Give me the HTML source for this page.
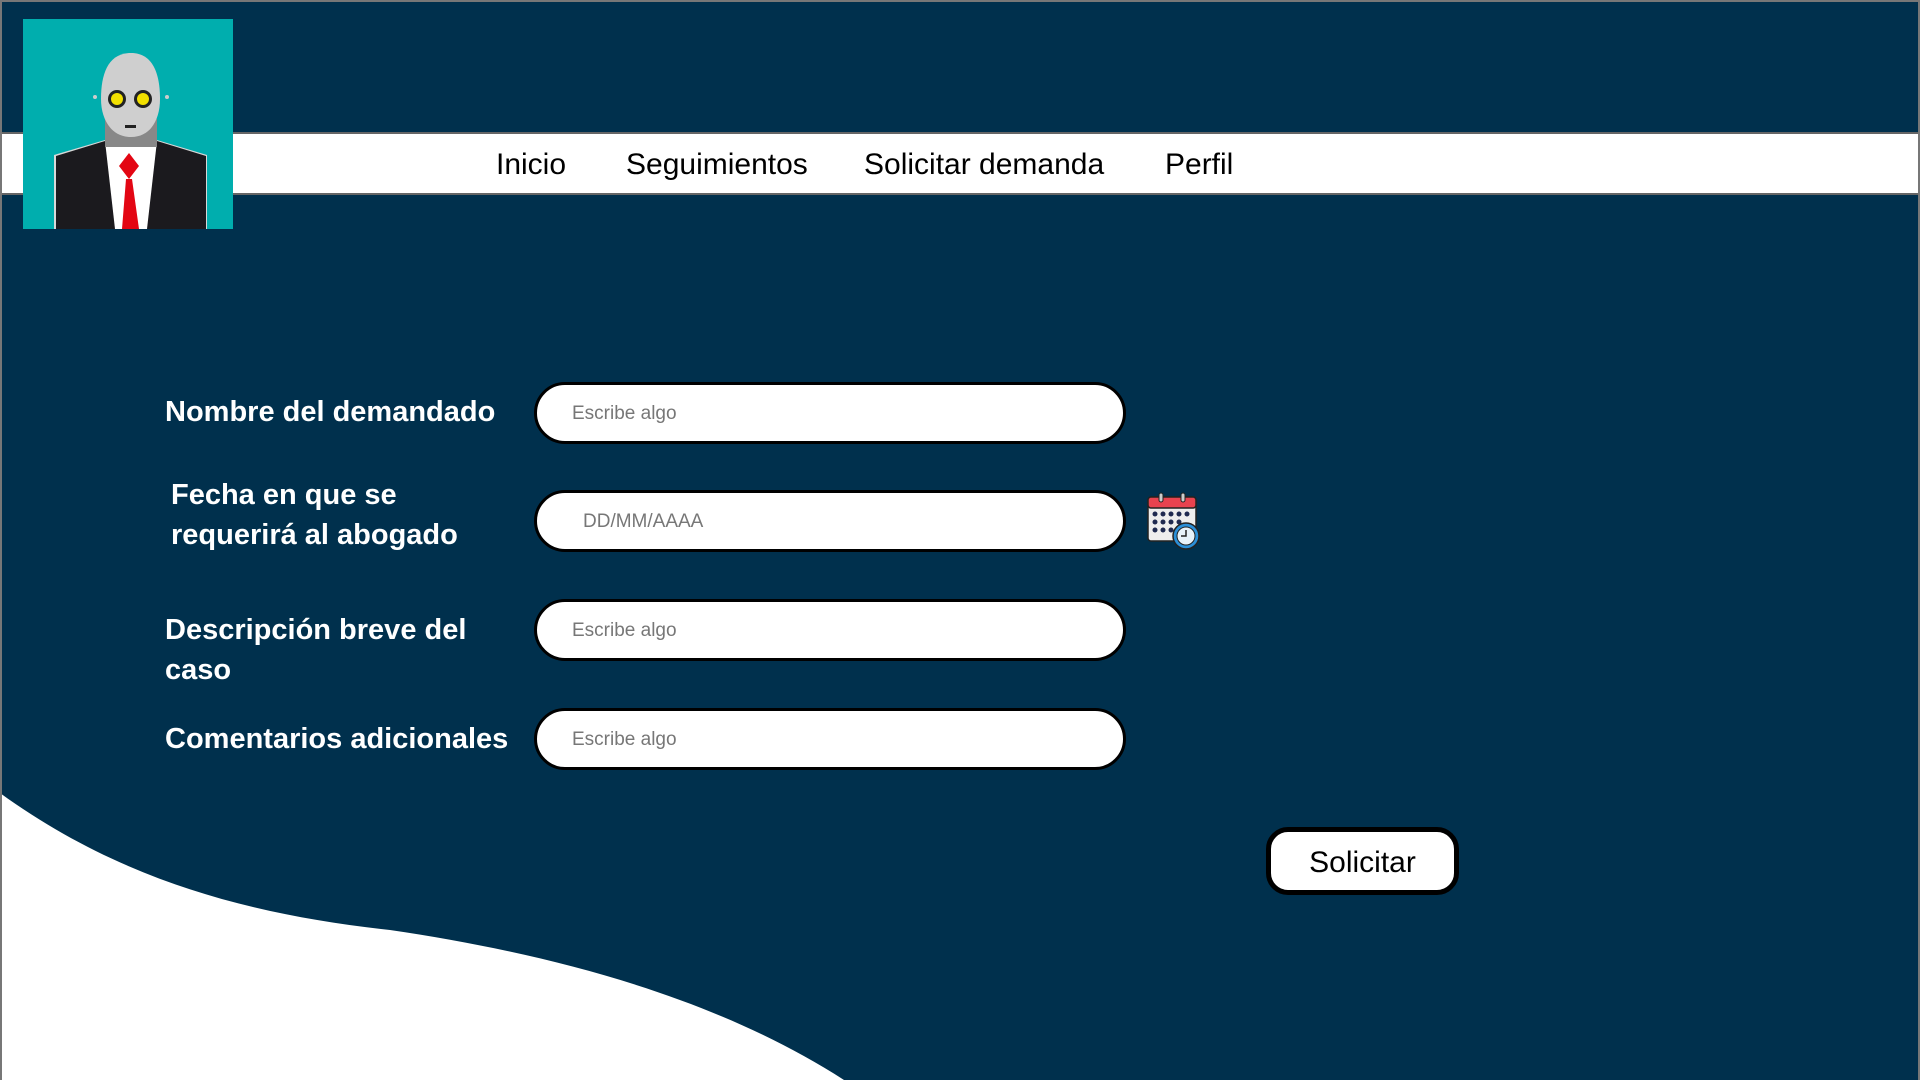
<!DOCTYPE html>
<html><head><meta charset="utf-8"><style>
*{margin:0;padding:0;box-sizing:border-box}
body{width:1920px;height:1080px;background:#00304d;position:relative;overflow:hidden;font-family:"Liberation Sans",sans-serif}
.frame{position:absolute;inset:0;border:2px solid #777;border-bottom:none;pointer-events:none}
.band{position:absolute;left:0;top:132px;width:1920px;height:63px;background:#fff;border-top:2px solid #666;border-bottom:2px solid #666}
.nav{position:absolute;top:148px;font-size:30px;color:#000;white-space:nowrap}
.logo{position:absolute;left:23px;top:19px;width:210px;height:210px;background:#00aeae;overflow:hidden}
.lbl{position:absolute;color:#fff;font-weight:bold;font-size:29px;line-height:40px}
.inp{position:absolute;left:534px;width:592px;height:62px;border:3px solid #000;border-radius:31px;background:#fff;color:#777;font-size:19px;line-height:58px;padding-left:35px}
.btn{position:absolute;left:1266px;top:827px;width:193px;height:68px;border:5px solid #000;border-radius:22px;background:#fff;font-size:30px;text-align:center;line-height:62px;color:#000}
</style></head><body>
<svg style="position:absolute;left:0;top:0" width="1920" height="1080"><path d="M0,793 C120,880 250,915 390,930 C560,955 720,1000 844,1080 L0,1080 Z" fill="#fff"/></svg>
<div class="band"></div>
<div class="frame"></div>
<div class="logo">
<svg width="210" height="210" viewBox="0 0 210 210">
<path d="M31,136 L82,121 L134,121 L184,136 L184,210 L31,210 Z" fill="#d8d8d8"/>
<path d="M33,137 L82,122 L134,122 L183,137 L183,210 L33,210 Z" fill="#1b1a1e"/>
<path d="M82,122 L134,122 L124,210 L92,210 Z" fill="#fff"/>
<path d="M106,134 L116,147 L106,160 L96,147 Z M103,160 L109,160 L116,210 L99,210 Z" fill="#e30613"/>
<rect x="82" y="100" width="52" height="28" fill="#888"/>
<path d="M108,34 C85,34 78,55 78,80 C78,100 88,118 108,118 C128,118 137,100 137,80 C137,55 130,34 108,34 Z" fill="#cfcfcf"/>
<circle cx="94" cy="80" r="9" fill="#222"/><circle cx="94" cy="80" r="6" fill="#f2e000"/>
<circle cx="120" cy="80" r="9" fill="#222"/><circle cx="120" cy="80" r="6" fill="#f2e000"/>
<rect x="102" y="106" width="11" height="3" fill="#222"/>
<circle cx="72" cy="78" r="2" fill="#ccc"/><circle cx="144" cy="78" r="2" fill="#ccc"/>
</svg></div>
<div class="nav" style="left:496px">Inicio</div>
<div class="nav" style="left:626px">Seguimientos</div>
<div class="nav" style="left:864px">Solicitar demanda</div>
<div class="nav" style="left:1165px">Perfil</div>

<div class="lbl" style="left:165px;top:392px">Nombre del demandado</div>
<div class="lbl" style="left:171px;top:475px">Fecha en que se<br>requerirá al abogado</div>
<div class="lbl" style="left:165px;top:610px">Descripción breve del<br>caso</div>
<div class="lbl" style="left:165px;top:719px">Comentarios adicionales</div>

<div class="inp" style="top:382px">Escribe algo</div>
<div class="inp" style="top:490px;padding-left:46px">DD/MM/AAAA</div>
<div class="inp" style="top:599px">Escribe algo</div>
<div class="inp" style="top:708px">Escribe algo</div>

<svg style="position:absolute;left:1146px;top:492px" width="58" height="60" viewBox="0 0 58 60">
<rect x="2" y="5" width="48" height="44" rx="3" fill="#eee" stroke="#222" stroke-width="1.5"/>
<rect x="2" y="5" width="48" height="11" rx="3" fill="#e8434f" stroke="#222" stroke-width="1.5"/>
<rect x="13" y="1" width="4" height="9" rx="2" fill="#ccc" stroke="#222"/>
<rect x="35" y="1" width="4" height="9" rx="2" fill="#ccc" stroke="#222"/>
<g fill="#1f2a50">
<circle cx="9" cy="22" r="2.5"/><circle cx="17" cy="22" r="2.5"/><circle cx="25" cy="22" r="2.5"/><circle cx="33" cy="22" r="2.5"/><circle cx="41" cy="22" r="2.5"/>
<circle cx="9" cy="30" r="2.5"/><circle cx="17" cy="30" r="2.5"/><circle cx="25" cy="30" r="2.5"/><circle cx="33" cy="30" r="2.5"/>
<circle cx="9" cy="38" r="2.5"/><circle cx="17" cy="38" r="2.5"/><circle cx="25" cy="38" r="2.5"/></g>
<circle cx="40" cy="44" r="13" fill="#2b8fd8" stroke="#222" stroke-width="1.5"/>
<circle cx="40" cy="44" r="9" fill="#e8f2fa" stroke="#222"/>
<path d="M40,38 V44 H35" stroke="#222" stroke-width="1.5" fill="none"/>
</svg>

<div class="btn">Solicitar</div>
</body></html>
